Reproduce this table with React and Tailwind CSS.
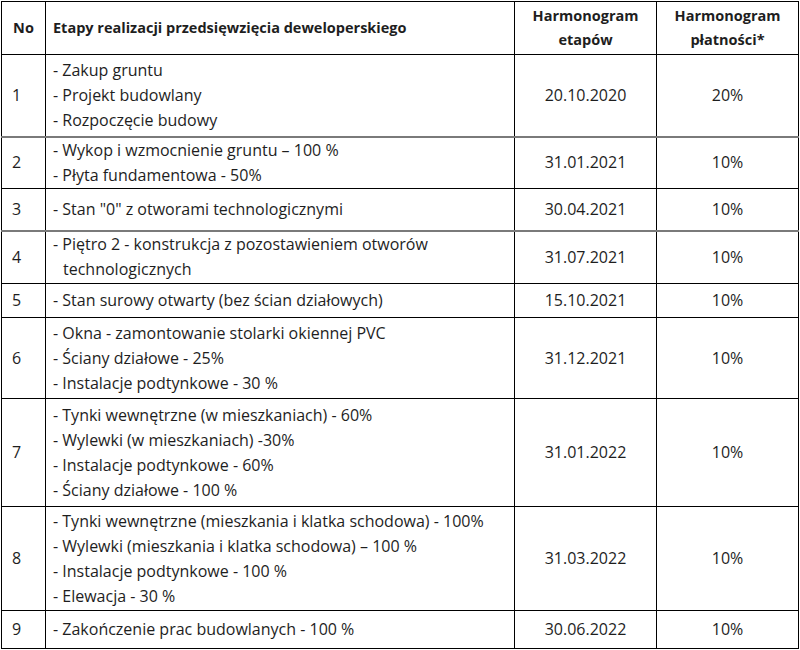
import React from "react";

const rows = [
  { no: "1", h: "h-[82px]", lines: ["- Zakup gruntu", "- Projekt budowlany", "- Rozpoczęcie budowy"], date: "20.10.2020", pay: "20%", gray: true },
  { no: "2", h: "h-[52px]", lines: ["- Wykop i wzmocnienie gruntu – 100 %", "- Płyta fundamentowa - 50%"], date: "31.01.2021", pay: "10%" },
  { no: "3", h: "h-[42px]", lines: ['- Stan "0" z otworami technologicznymi'], date: "30.04.2021", pay: "10%", gray: true },
  { no: "4", h: "h-[53px]", lines: ["- Piętro 2 - konstrukcja z pozostawieniem otworów", "INDENT:technologicznych"], date: "31.07.2021", pay: "10%" },
  { no: "5", h: "h-[34px]", lines: ["- Stan surowy otwarty (bez ścian działowych)"], date: "15.10.2021", pay: "10%" },
  { no: "6", h: "h-[81px]", lines: ["- Okna - zamontowanie stolarki okiennej PVC", "- Ściany działowe - 25%", "- Instalacje podtynkowe - 30 %"], date: "31.12.2021", pay: "10%" },
  { no: "7", h: "h-[108px]", lines: ["- Tynki wewnętrzne (w mieszkaniach) - 60%", "- Wylewki (w mieszkaniach) -30%", "- Instalacje podtynkowe - 60%", "- Ściany działowe - 100 %"], date: "31.01.2022", pay: "10%" },
  { no: "8", h: "h-[104px]", lines: ["- Tynki wewnętrzne (mieszkania i klatka schodowa) - 100%", "- Wylewki (mieszkania i klatka schodowa) – 100 %", "- Instalacje podtynkowe - 100 %", "- Elewacja - 30 %"], date: "31.03.2022", pay: "10%" },
  { no: "9", h: "h-[38px]", lines: ["- Zakończenie prac budowlanych - 100 %"], date: "30.06.2022", pay: "10%" },
];

export default function App() {
  return (
    <div className="w-[800px] h-[650px] bg-white pt-px pl-px" style={{ fontFamily: '"Open Sans", "Noto Sans", sans-serif' }}>
      <table className="border-collapse w-[797px] table-fixed text-[16px] leading-[25px] text-[#1e1e1e]">
        <colgroup>
          <col className="w-[44px]" />
          <col className="w-[469px]" />
          <col className="w-[142px]" />
          <col className="w-[142px]" />
        </colgroup>
        <thead>
          <tr className="h-[53px] text-[14.5px]">
            <th className="border border-black font-bold text-center align-middle leading-[24px]">No</th>
            <th className="border border-black font-bold text-left align-middle pl-[7px] leading-[24px]">Etapy realizacji przedsięwzięcia deweloperskiego</th>
            <th className="border border-black font-bold text-center align-middle leading-[24px]">Harmonogram<br />etapów</th>
            <th className="border border-black font-bold text-center align-middle leading-[24px]">Harmonogram<br />płatności*</th>
          </tr>
        </thead>
        <tbody>
          {rows.map((r) => {
            const b = `border-l border-r border-t border-black ${r.gray ? "border-b-2 border-b-[#7a7a7a]" : "border-b border-b-black"} align-middle`;
            return (
              <tr key={r.no} className={r.h}>
                <td className={`${b} pl-[10px]`}>{r.no}</td>
                <td className={`${b} pl-[7px]`}>
                  {r.lines.map((l, i) =>
                    l.startsWith("INDENT:") ? (
                      <div key={i} className="pl-[10px]">{l.slice(7)}</div>
                    ) : (
                      <div key={i}>{l}</div>
                    )
                  )}
                </td>
                <td className={`${b} text-center`}>{r.date}</td>
                <td className={`${b} text-center`}>{r.pay}</td>
              </tr>
            );
          })}
        </tbody>
      </table>
    </div>
  );
}
